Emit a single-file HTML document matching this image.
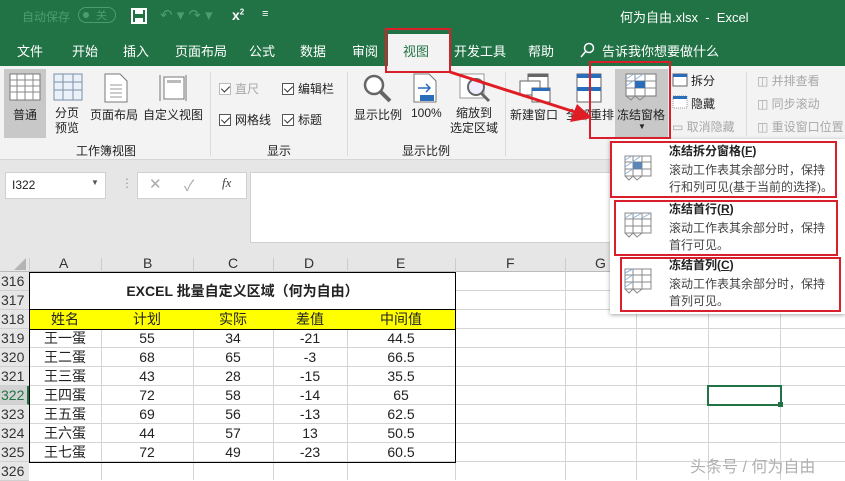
<!DOCTYPE html>
<html><head><meta charset="utf-8">
<style>
*{margin:0;padding:0;box-sizing:border-box}
body{width:845px;height:480px;overflow:hidden;position:relative;background:#fff;font-family:"Liberation Sans","Noto Sans CJK SC",sans-serif;font-size:12px;color:#222}
.a{position:absolute;white-space:nowrap}
.g{color:#fff}
.dis{color:#a8a8a8}
.cb{display:inline-block;width:12px;height:12px;border:1px solid #555;background:#fff;vertical-align:-2px;margin-right:4px;position:relative}
.cb:after{content:"";position:absolute;left:3px;top:0px;width:4px;height:7px;border:solid #333;border-width:0 1.5px 1.5px 0;transform:rotate(45deg)}
.vl{position:absolute;top:272px;height:208px;width:1px;background:#d4d4d4}
.hl{position:absolute;left:29px;width:816px;height:1px;background:#d4d4d4}
.rn{position:absolute;left:0;width:29px;height:19px;font-size:14px;line-height:19px;text-align:left;padding-left:1px;color:#333;background:#e6e6e6;border-bottom:1px solid #d0d0d0}
.cell{position:absolute;height:19px;line-height:19px;font-size:14px;text-align:center}
.box{position:absolute;border:2px solid #d9202a}
.rl{font-size:12px}
</style></head><body>
<div class="a" style="left:0;top:0;width:845px;height:66px;background:#217346"></div>
<div class="a" style="left:22px;top:8px;font-size:12px;color:#4f9a72">自动保存</div>
<div class="a" style="left:78px;top:7px;width:38px;height:16px;border:1px solid #4f9a72;border-radius:8px"></div>
<div class="a" style="left:83px;top:12px;width:6px;height:6px;border-radius:3px;background:#4f9a72"></div>
<div class="a" style="left:96px;top:7px;font-size:11px;color:#4f9a72">关</div>
<svg class="a" style="left:131px;top:8px" width="16" height="16"><rect x="1" y="1" width="14" height="14" fill="none" stroke="#fff" stroke-width="2"/><rect x="4" y="1" width="8" height="5" fill="#fff"/><rect x="4" y="10" width="8" height="5" fill="#fff"/></svg>
<div class="a" style="left:160px;top:6px;font-size:15px;color:#4f9a72">↶ ▾ ↷ ▾</div>
<div class="a g" style="left:232px;top:7px;font-size:14px;font-weight:bold">x<sup style="font-size:8px">2</sup></div>
<div class="a g" style="left:262px;top:8px;font-size:11px">≡</div>
<div class="a g" style="left:620px;top:7px;font-size:13px">何为自由.xlsx&nbsp; -&nbsp; Excel</div>
<div class="a" style="left:388px;top:34px;width:61px;height:34px;background:#f3f3f3"></div>
<div class="a g" style="left:17px;top:41px;font-size:13px">文件</div>
<div class="a g" style="left:72px;top:41px;font-size:13px">开始</div>
<div class="a g" style="left:123px;top:41px;font-size:13px">插入</div>
<div class="a g" style="left:175px;top:41px;font-size:13px">页面布局</div>
<div class="a g" style="left:249px;top:41px;font-size:13px">公式</div>
<div class="a g" style="left:300px;top:41px;font-size:13px">数据</div>
<div class="a g" style="left:352px;top:41px;font-size:13px">审阅</div>
<div class="a" style="left:403px;top:41px;font-size:13px;color:#217346">视图</div>
<div class="a g" style="left:454px;top:41px;font-size:13px">开发工具</div>
<div class="a g" style="left:528px;top:41px;font-size:13px">帮助</div>
<svg class="a" style="left:580px;top:42px" width="16" height="16"><circle cx="9" cy="6" r="4.5" fill="none" stroke="#fff" stroke-width="1.5"/><path d="M6 9L1 15" stroke="#fff" stroke-width="1.5"/></svg>
<div class="a g" style="left:602px;top:41px;font-size:13px">告诉我你想要做什么</div>
<div class="a" style="left:0;top:66px;width:845px;height:94px;background:#f3f3f3;border-bottom:1px solid #d6d6d6"></div>
<div class="a" style="left:4px;top:69px;width:42px;height:69px;background:#c8c8c8"></div>
<svg class="a" style="left:9px;top:73px" width="32" height="28"><rect x="1" y="1" width="30" height="26" fill="#fff" stroke="#777"/><path d="M1 7H31M1 13H31M1 19H31M8 1V27M16 1V27M24 1V27" stroke="#888"/></svg>
<div class="a rl" style="left:13px;top:106px">普通</div>
<svg class="a" style="left:53px;top:73px" width="30" height="28"><rect x="1" y="1" width="28" height="26" fill="#eaf1f8" stroke="#7a8fa8"/><path d="M1 9H29M1 17H29M10 1V27M20 1V27" stroke="#7a8fa8"/></svg>
<div class="a rl" style="left:55px;top:106px;line-height:15px">分页<br>预览</div>
<svg class="a" style="left:104px;top:73px" width="24" height="30"><path d="M1 1H16L23 8V29H1Z" fill="#fff" stroke="#777"/><path d="M6 12H18M6 16H18M6 20H18M6 24H18" stroke="#999"/></svg>
<div class="a rl" style="left:90px;top:106px">页面布局</div>
<svg class="a" style="left:158px;top:73px" width="30" height="30"><rect x="6" y="4" width="20" height="22" fill="#fff" stroke="#777"/><rect x="9" y="7" width="14" height="3" fill="#bbb"/><path d="M2 2V28M28 2V28" stroke="#777"/></svg>
<div class="a rl" style="left:143px;top:106px">自定义视图</div>
<div class="a" style="left:76px;top:142px;font-size:12px">工作簿视图</div>
<div class="a" style="left:210px;top:72px;width:1px;height:84px;background:#dadada"></div>
<div class="a dis" style="left:219px;top:80px;font-size:12px"><span class="cb" style="border-color:#bbb"></span>直尺</div>
<div class="a" style="left:282px;top:80px;font-size:12px"><span class="cb"></span>编辑栏</div>
<div class="a" style="left:219px;top:111px;font-size:12px"><span class="cb"></span>网格线</div>
<div class="a" style="left:282px;top:111px;font-size:12px"><span class="cb"></span>标题</div>
<div class="a" style="left:267px;top:142px;font-size:12px">显示</div>
<div class="a" style="left:347px;top:72px;width:1px;height:84px;background:#dadada"></div>
<svg class="a" style="left:362px;top:73px" width="30" height="30"><circle cx="12" cy="12" r="9" fill="#fff" stroke="#666" stroke-width="2.5"/><path d="M19 19L28 28" stroke="#666" stroke-width="4"/></svg>
<div class="a rl" style="left:354px;top:106px">显示比例</div>
<svg class="a" style="left:413px;top:73px" width="24" height="30"><path d="M1 1H16L23 8V29H1Z" fill="#fff" stroke="#777"/><path d="M5 15H17M13 11L17 15L13 19" stroke="#2a6ebb" stroke-width="1.5" fill="none"/><rect x="7" y="22" width="14" height="6" fill="#2a6ebb"/></svg>
<div class="a rl" style="left:411px;top:106px">100%</div>
<svg class="a" style="left:459px;top:73px" width="32" height="30"><rect x="1" y="1" width="24" height="24" fill="#fff" stroke="#999"/><circle cx="17" cy="14" r="8" fill="#eef" stroke="#666" stroke-width="2"/><path d="M22 20L30 28" stroke="#666" stroke-width="3"/></svg>
<div class="a rl" style="left:450px;top:106px;line-height:15px;text-align:center">缩放到<br>选定区域</div>
<div class="a" style="left:402px;top:142px;font-size:12px">显示比例</div>
<div class="a" style="left:505px;top:72px;width:1px;height:84px;background:#dadada"></div>
<svg class="a" style="left:518px;top:73px" width="34" height="30"><rect x="10" y="1" width="20" height="14" fill="#fff" stroke="#666"/><rect x="10" y="1" width="20" height="3" fill="#666"/><rect x="2" y="8" width="20" height="14" fill="#fff" stroke="#666"/><rect x="14" y="15" width="18" height="14" fill="#fff" stroke="#666"/><rect x="14" y="15" width="18" height="3" fill="#2a6ebb"/></svg>
<div class="a rl" style="left:510px;top:106px">新建窗口</div>
<svg class="a" style="left:576px;top:73px" width="26" height="30"><rect x="1" y="1" width="24" height="28" fill="#fff" stroke="#666"/><rect x="1" y="1" width="24" height="4" fill="#2a6ebb"/><rect x="1" y="14" width="24" height="4" fill="#2a6ebb"/></svg>
<div class="a rl" style="left:566px;top:106px">全部重排</div>
<div class="a" style="left:615px;top:69px;width:53px;height:68px;background:#c8c8c8"></div>
<svg class="a" style="left:625px;top:73px" width="32" height="28"><rect x="1" y="1" width="30" height="22" fill="#fff" stroke="#777"/><path d="M1 8H31M1 15H31M10 1V23M20 1V23M1 23L6 27L10 23L15 27L20 23" stroke="#888" fill="none"/><path d="M1 6L9 1M1 13L18 1" stroke="#8fb4d9"/><rect x="10" y="8" width="10" height="7" fill="#2a6ebb"/></svg>
<div class="a rl" style="left:617px;top:106px">冻结窗格</div>
<div class="a" style="left:638px;top:122px;font-size:8px">▼</div>
<svg class="a" style="left:672px;top:73px" width="16" height="14"><rect x="1" y="1" width="14" height="12" fill="#fff" stroke="#666"/><rect x="1" y="1" width="14" height="3" fill="#2a6ebb"/></svg>
<div class="a" style="left:691px;top:72px;font-size:12px">拆分</div>
<svg class="a" style="left:672px;top:95px" width="16" height="14"><rect x="1" y="1" width="14" height="12" fill="#fff" stroke="#999" stroke-dasharray="1 1"/><rect x="1" y="1" width="14" height="3" fill="#2a6ebb"/></svg>
<div class="a" style="left:691px;top:95px;font-size:12px">隐藏</div>
<div class="a dis" style="left:672px;top:118px;font-size:12px">▭ 取消隐藏</div>
<div class="a" style="left:746px;top:72px;width:1px;height:64px;background:#dadada"></div>
<div class="a dis" style="left:757px;top:72px;font-size:12px">◫ 并排查看</div>
<div class="a dis" style="left:757px;top:95px;font-size:12px">◫ 同步滚动</div>
<div class="a dis" style="left:757px;top:118px;font-size:12px">◫ 重设窗口位置</div>
<div class="a" style="left:0;top:160px;width:845px;height:95px;background:#e6e6e6"></div>
<div class="a" style="left:5px;top:172px;width:101px;height:27px;background:#fff;border:1px solid #d0d0d0"></div>
<div class="a" style="left:12px;top:178px;font-size:12px">I322</div>
<div class="a" style="left:91px;top:178px;font-size:8px;color:#555">▼</div>
<div class="a" style="left:121px;top:176px;color:#999;font-size:12px">⋮</div>
<div class="a" style="left:137px;top:172px;width:110px;height:27px;background:#fff;border:1px solid #d0d0d0"></div>
<div class="a" style="left:149px;top:175px;color:#aaa;font-size:15px">✕</div>
<div class="a" style="left:184px;top:175px;color:#aaa;font-size:15px">✓</div>
<div class="a" style="left:222px;top:175px;color:#444;font-size:13px;font-style:italic;font-family:'Liberation Serif',serif">fx</div>
<div class="a" style="left:250px;top:172px;width:595px;height:71px;background:#fff;border:1px solid #d0d0d0"></div>
<div class="a" style="left:0;top:255px;width:845px;height:17px;background:#e6e6e6;border-bottom:1px solid #bbb"></div>
<svg class="a" style="left:14px;top:258px" width="12" height="12"><path d="M12 0V12H0Z" fill="#b4b4b4"/></svg>
<div class="a" style="left:29px;top:255px;width:816px;height:17px;font-size:14px;line-height:17px;color:#333">
<span class="a" style="left:30px">A</span><span class="a" style="left:114px">B</span><span class="a" style="left:199px">C</span><span class="a" style="left:275px">D</span><span class="a" style="left:367px">E</span><span class="a" style="left:477px">F</span><span class="a" style="left:566px">G</span></div>
<div class="a" style="left:101px;top:258px;width:1px;height:14px;background:#ccc"></div>
<div class="a" style="left:193px;top:258px;width:1px;height:14px;background:#ccc"></div>
<div class="a" style="left:273px;top:258px;width:1px;height:14px;background:#ccc"></div>
<div class="a" style="left:347px;top:258px;width:1px;height:14px;background:#ccc"></div>
<div class="a" style="left:455px;top:258px;width:1px;height:14px;background:#ccc"></div>
<div class="a" style="left:565px;top:258px;width:1px;height:14px;background:#ccc"></div>
<div class="a" style="left:29px;top:258px;width:1px;height:14px;background:#ccc"></div>
<div class="vl" style="left:101px"></div><div class="vl" style="left:193px"></div><div class="vl" style="left:273px"></div><div class="vl" style="left:347px"></div><div class="vl" style="left:455px"></div><div class="vl" style="left:565px"></div><div class="vl" style="left:636px"></div><div class="vl" style="left:708px"></div><div class="vl" style="left:780px"></div>
<div class="hl" style="top:290px"></div><div class="hl" style="top:309px"></div><div class="hl" style="top:328px"></div><div class="hl" style="top:347px"></div><div class="hl" style="top:366px"></div><div class="hl" style="top:385px"></div><div class="hl" style="top:404px"></div><div class="hl" style="top:423px"></div><div class="hl" style="top:442px"></div><div class="hl" style="top:461px"></div>
<div class="rn" style="top:272px">316</div><div class="rn" style="top:291px">317</div><div class="rn" style="top:310px">318</div><div class="rn" style="top:329px">319</div><div class="rn" style="top:348px">320</div><div class="rn" style="top:367px">321</div><div class="rn" style="top:386px;background:#d2d2d2;color:#217346;border-right:2px solid #217346">322</div><div class="rn" style="top:405px">323</div><div class="rn" style="top:424px">324</div><div class="rn" style="top:443px">325</div><div class="rn" style="top:462px">326</div>
<div class="a" style="left:29px;top:272px;width:427px;height:38px;background:#fff"></div>
<div class="a" style="left:29px;top:272px;width:427px;height:38px;text-align:center;line-height:38px;font-size:14px;font-weight:bold">EXCEL 批量自定义区域（何为自由）</div>
<div class="a" style="left:29px;top:310px;width:427px;height:19px;background:#ffff00"></div>
<div class="a" style="left:29px;top:272px;width:427px;height:191px;border:1px solid #000"></div>
<div class="a" style="left:29px;top:309px;width:427px;height:1px;background:#000"></div>
<div class="a" style="left:29px;top:329px;width:427px;height:1px;background:#000"></div>
<div id="t"></div>
<div class="a" style="left:707px;top:385px;width:75px;height:21px;border:2px solid #217346"></div>
<div class="a" style="left:778px;top:402px;width:5px;height:5px;background:#217346"></div>
<div class="a" style="left:610px;top:139px;width:235px;height:175px;background:#fff;box-shadow:0 1px 4px rgba(0,0,0,.35)"></div>
<svg class="a" style="left:624px;top:155px" width="30" height="26"><rect x="1" y="1" width="26" height="20" fill="#fff" stroke="#888"/><path d="M1 7H27M1 14H27M9 1V21M18 1V21M1 21L5 25L9 21L13 25L18 21" stroke="#888" fill="none"/><path d="M1 5L8 1M1 12L17 1M1 19L9 14" stroke="#8fb4d9"/><rect x="9" y="7" width="9" height="7" fill="#5b86b8"/></svg>
<div class="a" style="left:669px;top:143px;font-size:12px;font-weight:bold;line-height:16px">冻结拆分窗格(<u>F</u>)</div>
<div class="a" style="left:669px;top:162px;font-size:12px;line-height:17px;color:#444">滚动工作表其余部分时，保持<br>行和列可见(基于当前的选择)。</div>
<svg class="a" style="left:624px;top:212px" width="30" height="26"><rect x="1" y="1" width="26" height="20" fill="#fff" stroke="#888"/><path d="M1 7H27M1 14H27M9 1V21M18 1V21M1 21L5 25L9 21L13 25L18 21" stroke="#888" fill="none"/><path d="M1 6L9 1M9 6L18 1M18 6L27 1" stroke="#8fb4d9"/></svg>
<div class="a" style="left:669px;top:201px;font-size:12px;font-weight:bold;line-height:16px">冻结首行(<u>R</u>)</div>
<div class="a" style="left:669px;top:220px;font-size:12px;line-height:17px;color:#444">滚动工作表其余部分时，保持<br>首行可见。</div>
<svg class="a" style="left:624px;top:268px" width="30" height="26"><rect x="1" y="1" width="26" height="20" fill="#fff" stroke="#888"/><path d="M1 7H27M1 14H27M9 1V21M18 1V21M1 21L5 25L9 21L13 25L18 21" stroke="#888" fill="none"/><path d="M1 5L9 1M1 12L9 7M1 19L9 14" stroke="#8fb4d9"/></svg>
<div class="a" style="left:669px;top:257px;font-size:12px;font-weight:bold;line-height:16px">冻结首列(<u>C</u>)</div>
<div class="a" style="left:669px;top:276px;font-size:12px;line-height:17px;color:#444">滚动工作表其余部分时，保持<br>首列可见。</div>
<div class="box" style="left:385px;top:28px;width:66px;height:45px"></div>
<div class="box" style="left:589px;top:61px;width:82px;height:78px"></div>
<div class="box" style="left:610px;top:141px;width:227px;height:57px"></div>
<div class="box" style="left:614px;top:200px;width:224px;height:56px"></div>
<div class="box" style="left:620px;top:257px;width:221px;height:55px"></div>
<svg class="a" style="left:0;top:0" width="845" height="480"><path d="M450 72L578 113" stroke="#e01c24" stroke-width="3"/><path d="M592 118L570 122L577 104Z" fill="#e01c24"/></svg>
<div class="a" style="left:690px;top:453px;font-size:16px;color:#b0b0b0">头条号 / 何为自由</div>
<script>
var d=[["姓名","计划","实际","差值","中间值"],["王一蛋","55","34","-21","44.5"],["王二蛋","68","65","-3","66.5"],["王三蛋","43","28","-15","35.5"],["王四蛋","72","58","-14","65"],["王五蛋","69","56","-13","62.5"],["王六蛋","44","57","13","50.5"],["王七蛋","72","49","-23","60.5"]];
var x=[29,101,193,273,347,455],h="";
for(var r=0;r<8;r++)for(var c=0;c<5;c++){h+='<div class="cell" style="left:'+x[c]+'px;top:'+(310+r*19)+'px;width:'+(x[c+1]-x[c])+'px">'+d[r][c]+'</div>';}
document.getElementById('t').outerHTML=h;
</script>
</body></html>
